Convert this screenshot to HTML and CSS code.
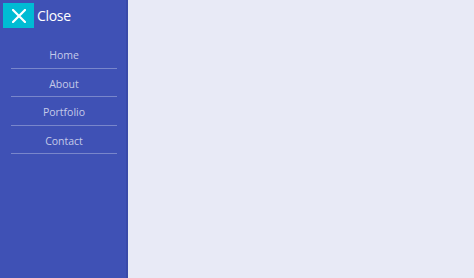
FILE: index.html
```html
<!DOCTYPE html>
<html>
<head>
<meta charset="utf-8">
<link rel="stylesheet" href="styles.css">
</head>
<body>
<div class="page">
  <nav class="sidebar">
    <div class="head">
      <button class="close-btn" aria-label="Close">
        <svg width="14" height="14" viewBox="0 0 14 14"><path d="M1 1 L13 13 M13 1 L1 13" stroke="#fff" stroke-width="2.2" stroke-linecap="square"/></svg>
      </button>
      <span class="close-label">Close</span>
    </div>
    <ul class="menu">
      <li><a href="#">Home</a></li>
      <li><a href="#">About</a></li>
      <li><a href="#">Portfolio</a></li>
      <li><a href="#">Contact</a></li>
    </ul>
  </nav>
  <main class="content"></main>
</div>
</body>
</html>
```
FILE: styles.css
```css
html, body {
  margin: 0;
  padding: 0;
  height: 100%;
}
body {
  font-family: "Open Sans", "Liberation Sans", sans-serif;
  background: #e8eaf6;
}
.page {
  display: flex;
  height: 100vh;
}
.sidebar {
  width: 128px;
  flex: 0 0 128px;
  background: #3f51b5;
  box-shadow: inset -2px 0 0 #3a4aa8, 1px 0 0 #dfe3f7;
  display: flex;
  flex-direction: column;
}
.head {
  display: flex;
  align-items: center;
  gap: 3px;
  padding: 3px;
}
.close-btn {
  width: 31px;
  height: 25px;
  border: 0;
  padding: 0;
  background: #00bcd4;
  display: flex;
  align-items: center;
  justify-content: center;
}
.close-label {
  color: #fff;
  font-size: 14px;
  line-height: 20px;
  letter-spacing: -0.3px;
}
.menu {
  list-style: none;
  margin: 9px 11px 0;
  padding: 0;
}
.menu li {
  border-bottom: 1px solid #7986cb;
}
.menu a {
  display: block;
  text-align: center;
  color: #c5cae9;
  text-decoration: none;
  font-size: 10.5px;
  line-height: 16px;
  padding: 7px 0 4.5px;
}
.content {
  flex: 1;
  background: #e8eaf6;
}
```
